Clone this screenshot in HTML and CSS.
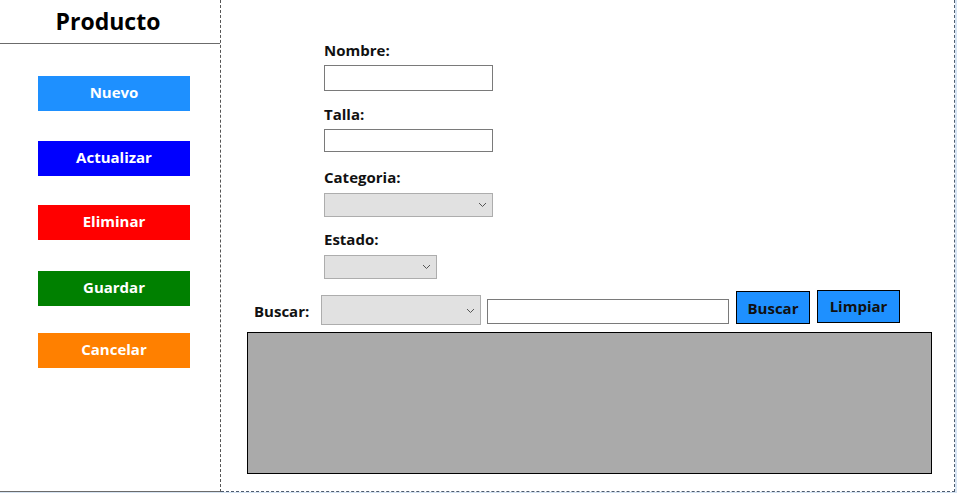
FILE: index.html
```html
<!DOCTYPE html>
<html lang="es">
<head>
  <meta charset="UTF-8">
  <title>Producto</title>
  <link rel="stylesheet" href="styles.css">
</head>
<body>
  <div class="app">
    <aside class="sidebar">
      <h1>Producto</h1>
      <nav class="menu">
        <button class="btn btn-nuevo">Nuevo</button>
        <button class="btn btn-actualizar">Actualizar</button>
        <button class="btn btn-eliminar">Eliminar</button>
        <button class="btn btn-guardar">Guardar</button>
        <button class="btn btn-cancelar">Cancelar</button>
      </nav>
    </aside>

    <main class="content">
      <form class="fields">
        <div class="field">
          <label for="nombre">Nombre:</label>
          <input type="text" id="nombre" class="input input-nombre">
        </div>
        <div class="field">
          <label for="talla">Talla:</label>
          <input type="text" id="talla" class="input">
        </div>
        <div class="field field-categoria">
          <label for="categoria">Categoria:</label>
          <span class="combo combo-wide">
            <select id="categoria"></select>
            <svg class="chev" width="9" height="6" viewBox="0 0 9 6"><path d="M1 1 L4.5 4.5 L8 1" fill="none" stroke="#555" stroke-width="1"/></svg>
          </span>
        </div>
        <div class="field">
          <label for="estado">Estado:</label>
          <span class="combo combo-small">
            <select id="estado"></select>
            <svg class="chev" width="9" height="6" viewBox="0 0 9 6"><path d="M1 1 L4.5 4.5 L8 1" fill="none" stroke="#555" stroke-width="1"/></svg>
          </span>
        </div>
      </form>

      <div class="search">
        <label for="buscar-campo" class="search-label">Buscar:</label>
        <span class="combo combo-search">
          <select id="buscar-campo"></select>
          <svg class="chev" width="9" height="6" viewBox="0 0 9 6"><path d="M1 1 L4.5 4.5 L8 1" fill="none" stroke="#555" stroke-width="1"/></svg>
        </span>
        <input type="text" class="input input-search">
        <button class="btn-search btn-buscar">Buscar</button>
        <button class="btn-search btn-limpiar">Limpiar</button>
      </div>

      <div class="grid"></div>
    </main>
  </div>
</body>
</html>
```

FILE: styles.css
```css
html, body {
  margin: 0;
  padding: 0;
  font-family: "Open Sans", Arial, sans-serif;
  background-color: #d5e3f2;
}
.app {
  display: flex;
  width: 955px;
  height: 492px;
  background: #fff;
}
.sidebar {
  width: 221px;
  box-sizing: border-box;
  border-right: 1px dashed #555;
  border-bottom: 1px solid #6b6b6b;
}
.sidebar h1 {
  margin: 0;
  height: 43px;
  line-height: 43px;
  font-size: 23px;
  font-weight: bold;
  text-align: center;
  border-bottom: 1px solid #6b6b6b;
  padding-right: 4px;
}
.menu {
  display: flex;
  flex-direction: column;
  align-items: flex-start;
  gap: 30px;
  padding-top: 32px;
  padding-left: 38px;
}
.btn {
  width: 152px;
  height: 35px;
  padding: 0 0 3px;
  border: none;
  color: #fff;
  font-family: inherit;
  font-size: 15px;
  font-weight: bold;
  cursor: pointer;
}
.btn-nuevo { background: #1e90ff; }
.btn-actualizar { background: #0000ff; }
.btn-eliminar { background: #ff0000; margin-top: -1px; }
.btn-guardar { background: #008000; margin-top: 1px; }
.btn-cancelar { background: #ff8000; margin-top: -3px; }

.content {
  flex: 1;
  box-sizing: border-box;
  border-right: 1px dashed #4d5b6e;
  border-bottom: 1px dashed #4d5b6e;
}
.fields {
  display: flex;
  flex-direction: column;
  gap: 14px;
  padding-top: 41px;
  padding-left: 103px;
}
.field label {
  display: block;
  height: 18px;
  line-height: 18px;
  margin-bottom: 6px;
  font-size: 15px;
  font-weight: bold;
  color: #111;
}
.field-categoria { margin-top: 2px; }
.input {
  display: block;
  box-sizing: border-box;
  width: 169px;
  height: 23px;
  margin: 0;
  border: 1px solid #7a7a7a;
  background: #fff;
}
.input-nombre { height: 26px; }

.combo {
  position: relative;
  display: block;
  height: 24px;
}
.combo select {
  appearance: none;
  box-sizing: border-box;
  width: 100%;
  height: 100%;
  margin: 0;
  border: 1px solid #adadad;
  background: #e1e1e1;
}
.combo .chev {
  position: absolute;
  right: 6px;
  top: 50%;
  margin-top: -2px;
}
.combo-wide { width: 169px; }
.combo-small { width: 113px; }

.search {
  display: flex;
  align-items: flex-end;
  margin-top: 12px;
  padding-left: 33px;
}
.search-label {
  align-self: center;
  margin-top: 8px;
  width: 67px;
  font-size: 15px;
  font-weight: bold;
  color: #111;
}
.combo-search {
  width: 160px;
  height: 30px;
  margin-bottom: -1px;
}
.input-search {
  width: 242px;
  height: 25px;
  margin-left: 6px;
}
.btn-search {
  height: 33px;
  margin-left: 7px;
  border: 1px solid #000;
  background: #1e90ff;
  color: #111;
  font-family: inherit;
  font-size: 15px;
  font-weight: bold;
  cursor: pointer;
}
.btn-buscar { width: 74px; }
.btn-limpiar { width: 83px; margin-bottom: 1px; padding-bottom: 3px; }

.grid {
  box-sizing: border-box;
  width: 685px;
  height: 142px;
  margin-top: 8px;
  margin-left: 26px;
  border: 1px solid #000;
  background: #aaaaaa;
}
```
